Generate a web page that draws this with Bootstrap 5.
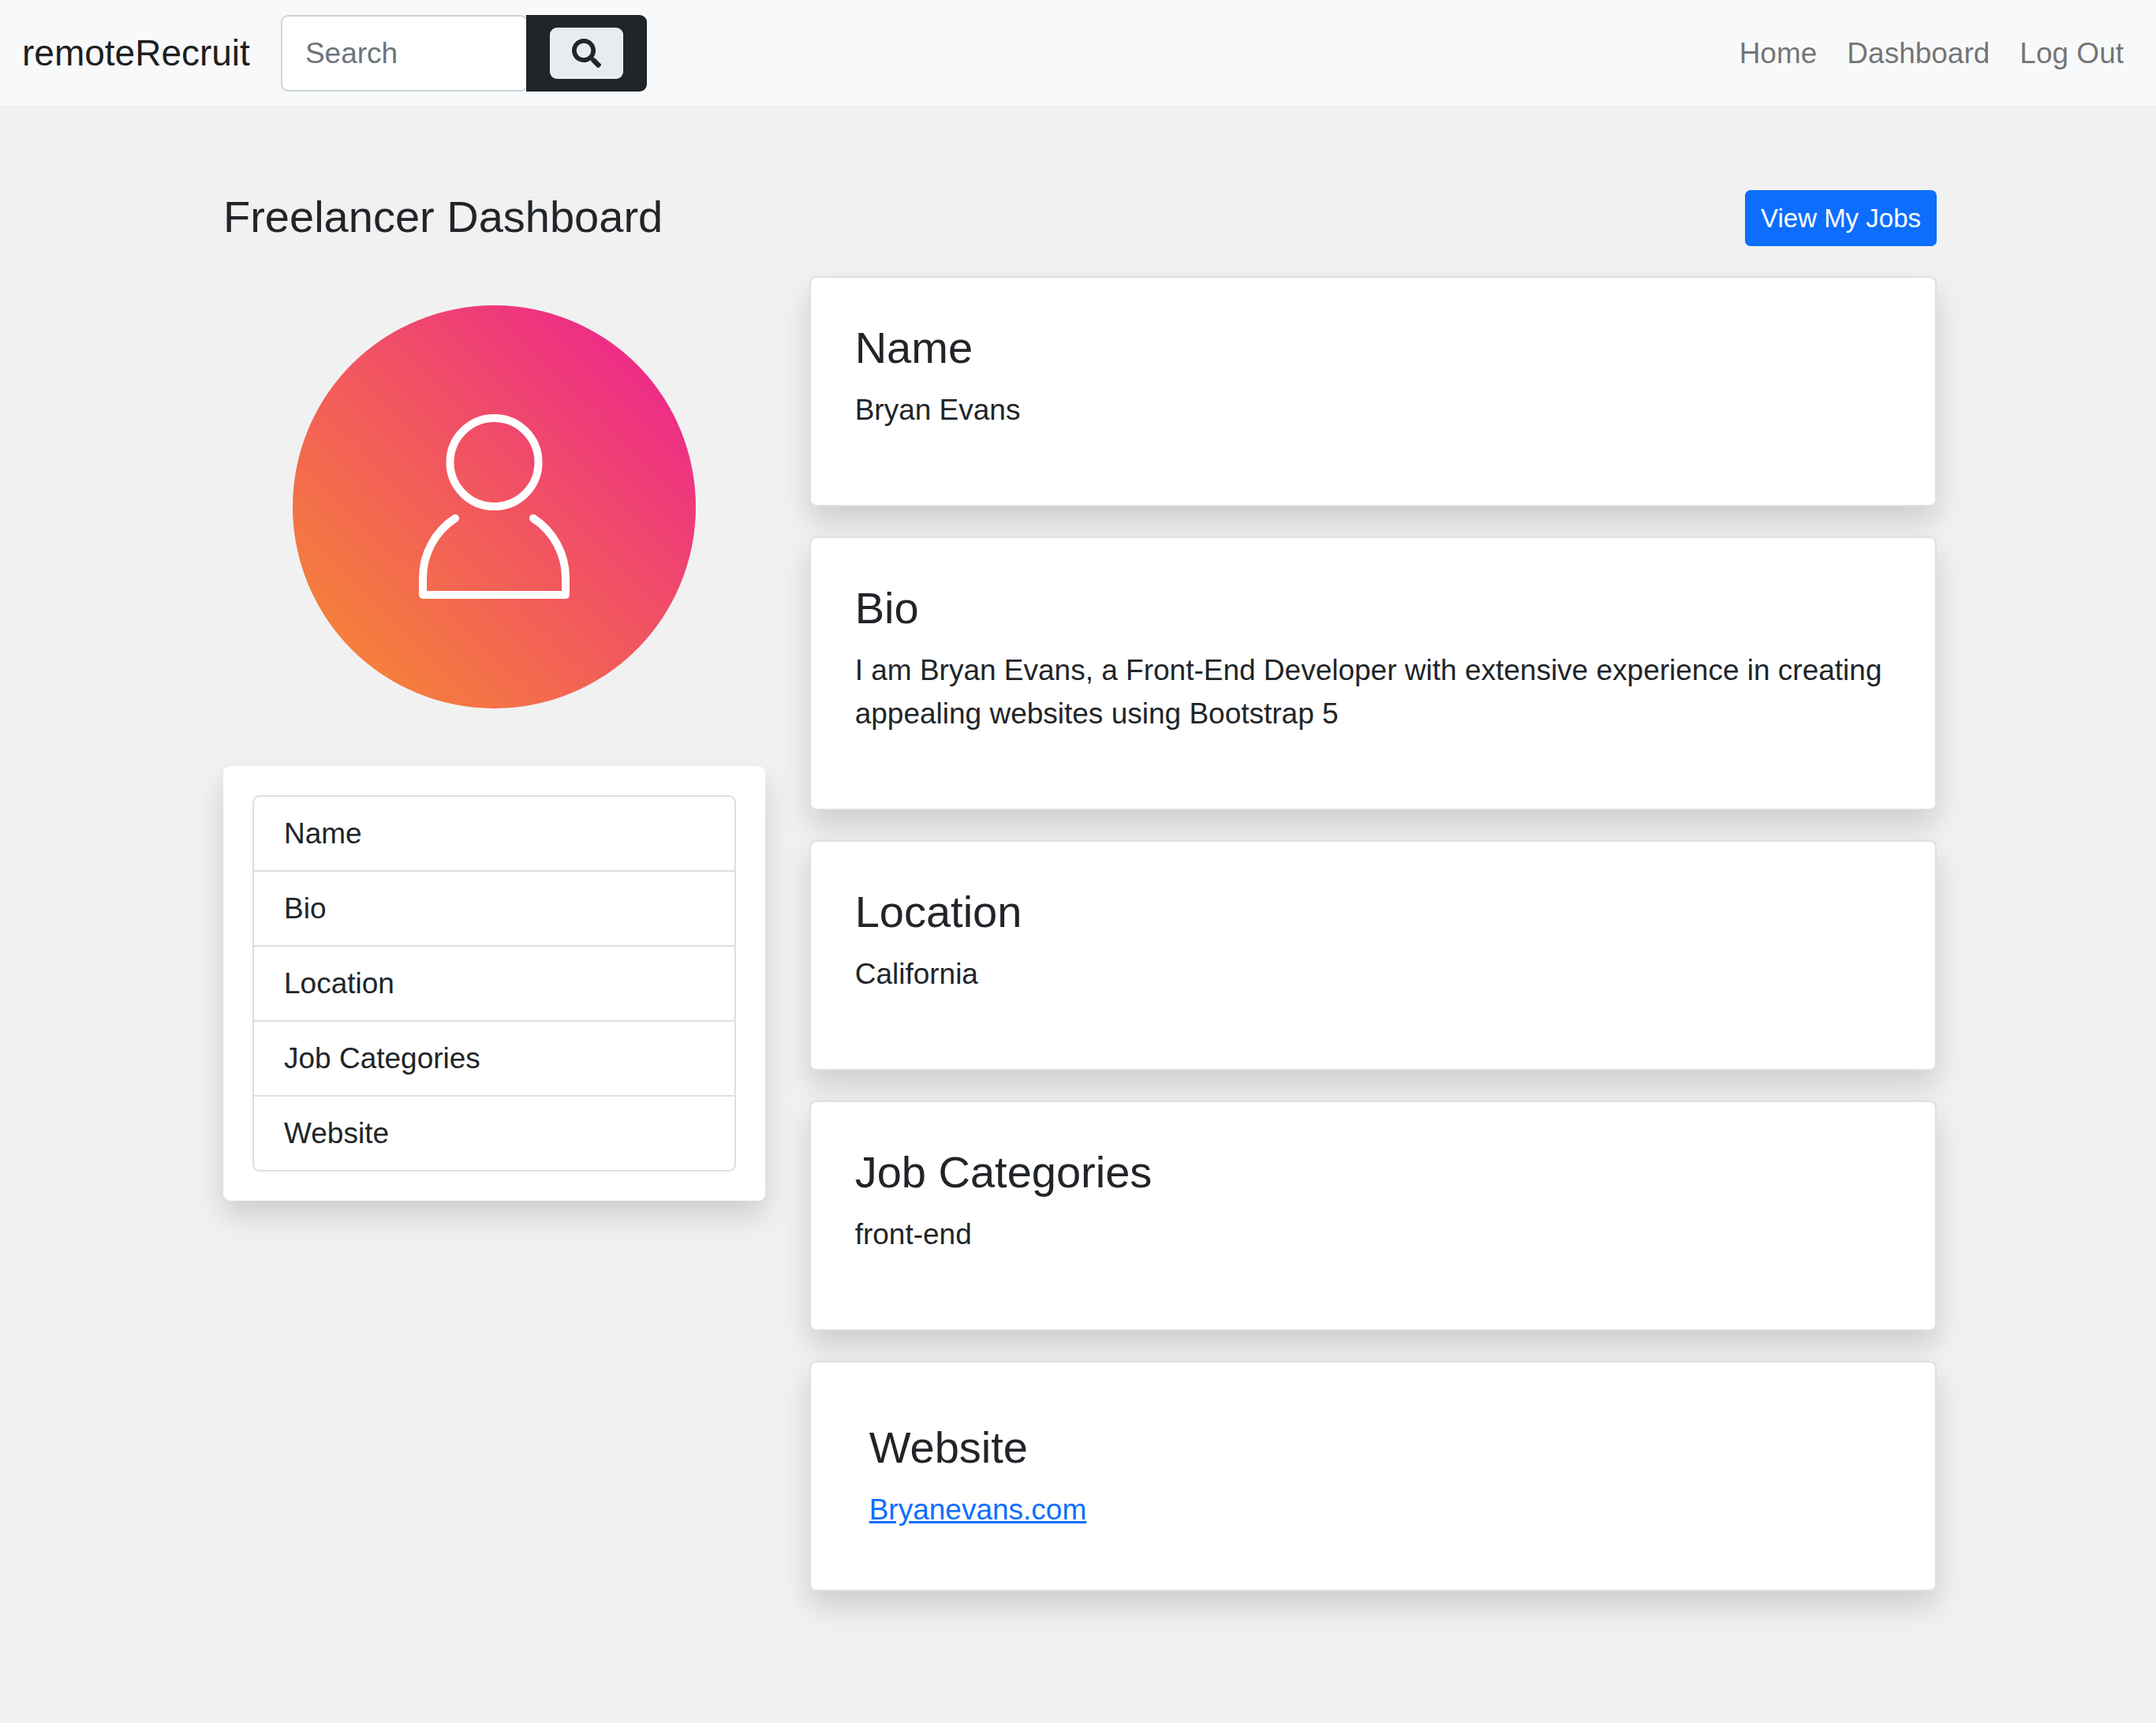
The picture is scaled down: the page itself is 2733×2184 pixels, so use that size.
<!DOCTYPE html>
<html lang="en">
<head>
<meta charset="utf-8">
<meta name="viewport" content="width=device-width, initial-scale=1">
<title>remoteRecruit</title>
<link href="https://cdn.jsdelivr.net/npm/bootstrap@5.3.0/dist/css/bootstrap.min.css" rel="stylesheet">
<style>
  body { font: 400 37px/55px "Liberation Sans", Arial, sans-serif; background: #f1f1f1; color: #212529; }
  a { color: #0d6efd; }
  .site-nav { background: #f8f9fa; padding: 19px 22px 18px 28px; }
  .site-nav .navbar-brand { font-size: 46px; line-height: 69px; padding: 0; margin: 0 39px 0 0; color: rgba(0,0,0,.9); }
  .site-nav .navbar-nav .nav-link { padding: 18px 19px; font-size: 37px; line-height: 55px; color: rgba(0,0,0,.55); }
  .search-box { width: 313px; height: 97px; padding: 14px 29px; border: 2px solid #ced4da; border-radius: 9px; font-size: 37px; line-height: 55px; background: #fff; }
  .search-box::placeholder { color: #6c757d; }
  .search-addon { margin-left: -2px; padding: 16px 30px; background: #212529; border-radius: 0 9px 9px 0; }
  .search-btn { width: 93px; height: 65px; padding: 0; border: 0; border-radius: 9px; background: #e9ecef; color: #212529; }
  .search-btn:hover { background: #fff; }
  .search-btn svg { width: 37px; height: 37px; }
  .dash { padding: 107px 0 74px 5px; }
  .dash > .container { max-width: 2228px; --bs-gutter-x: 56px; }
  .dash .row { --bs-gutter-x: 56px; }
  .dash-head { margin-bottom: 38px; }
  .dash h1, .panel-card h2 { font-size: 56px; line-height: 67px; font-weight: 400; margin: 0; }
  .jobs-btn { font-size: 33px; line-height: 49px; padding: 9px 18px; border-width: 2px; border-radius: 7px; background: #0d6efd; border-color: #0d6efd; }
  .avatar { display: block; width: 511px; max-width: 100%; margin: 37px auto 73px; }
  .raised { box-shadow: 0 19px 37px rgba(0,0,0,.15); border-radius: 9px; background: #fff; }
  .side-menu { padding: 37px; }
  .side-menu .list-group { --bs-list-group-border-width: 2px; --bs-list-group-border-radius: 9px; --bs-list-group-border-color: #dfdfdf; }
  .side-menu .list-group-item { padding: 19px 38px; line-height: 55px; color: #212529; }
  .panel-card { border: 2px solid #dfdfdf; padding: 55px 56px; }
  .panel-card h2 { margin-bottom: 18px; }
  .panel-card p { margin: 0 0 38px; }
  .panel-card.roomy { padding: 74px; }
  .panel-card.roomy p { margin: 0; }
  .stack { gap: 38px; }
</style>
</head>
<body>
<nav class="site-nav navbar navbar-expand">
  <a class="navbar-brand" href="#">remoteRecruit</a>
  <form class="d-flex" role="search">
    <input class="form-control search-box" type="search" placeholder="Search" aria-label="Search">
    <span class="search-addon d-flex">
      <button class="search-btn d-flex align-items-center justify-content-center" type="button" aria-label="Submit search">
        <svg viewBox="0 0 512 512" fill="currentColor" aria-hidden="true"><path d="M505 442.7L405.3 343c-4.5-4.5-10.6-7-17-7H372c27.6-35.3 44-79.7 44-128C416 93.1 322.9 0 208 0S0 93.1 0 208s93.1 208 208 208c48.3 0 92.7-16.4 128-44v16.3c0 6.4 2.5 12.5 7 17l99.7 99.7c9.4 9.4 24.6 9.4 33.9 0l28.3-28.3c9.4-9.4 9.4-24.6.1-34zM208 336c-70.7 0-128-57.2-128-128 0-70.7 57.2-128 128-128 70.7 0 128 57.2 128 128 0 70.7-57.2 128-128 128z"/></svg>
      </button>
    </span>
  </form>
  <ul class="navbar-nav ms-auto">
    <li class="nav-item"><a class="nav-link" href="#">Home</a></li>
    <li class="nav-item"><a class="nav-link" href="#">Dashboard</a></li>
    <li class="nav-item"><a class="nav-link" href="#">Log Out</a></li>
  </ul>
</nav>

<main class="dash">
  <div class="container">
    <div class="dash-head d-flex justify-content-between align-items-start">
      <h1>Freelancer Dashboard</h1>
      <button class="btn btn-primary jobs-btn" type="button">View My Jobs</button>
    </div>
    <div class="row">
      <div class="col-md-4">
        <svg class="avatar" viewBox="0 0 511 511" role="img" aria-label="Profile picture">
          <defs>
            <linearGradient id="sunset" x1="0.13" y1="0.87" x2="0.87" y2="0.13">
              <stop offset="0" stop-color="#f5803b"/>
              <stop offset="0.54" stop-color="#f15362"/>
              <stop offset="1" stop-color="#ed2b88"/>
            </linearGradient>
          </defs>
          <circle cx="255.5" cy="255.5" r="255.5" fill="url(#sunset)"/>
          <g fill="none" stroke="#fff" stroke-width="10" stroke-linecap="round" stroke-linejoin="round">
            <circle cx="255.5" cy="199" r="56"/>
            <path d="M206 270A90 90 0 0 0 165 345V367H346V345A90 90 0 0 0 305 270"/>
          </g>
        </svg>
        <div class="side-menu raised">
          <div class="list-group">
            <a class="list-group-item list-group-item-action" href="#name">Name</a>
            <a class="list-group-item list-group-item-action" href="#bio">Bio</a>
            <a class="list-group-item list-group-item-action" href="#location">Location</a>
            <a class="list-group-item list-group-item-action" href="#categories">Job Categories</a>
            <a class="list-group-item list-group-item-action" href="#website">Website</a>
          </div>
        </div>
      </div>
      <div class="col-md-8 d-flex flex-column stack">
        <section class="panel-card raised" id="name">
          <h2>Name</h2>
          <p>Bryan Evans</p>
        </section>
        <section class="panel-card raised" id="bio">
          <h2>Bio</h2>
          <p>I am Bryan Evans, a Front-End Developer with extensive experience in creating appealing websites using Bootstrap 5</p>
        </section>
        <section class="panel-card raised" id="location">
          <h2>Location</h2>
          <p>California</p>
        </section>
        <section class="panel-card raised" id="categories">
          <h2>Job Categories</h2>
          <p>front-end</p>
        </section>
        <section class="panel-card roomy raised" id="website">
          <h2>Website</h2>
          <p><a href="#website">Bryanevans.com</a></p>
        </section>
      </div>
    </div>
  </div>
</main>
<script src="https://cdn.jsdelivr.net/npm/bootstrap@5.3.0/dist/js/bootstrap.bundle.min.js"></script>
</body>
</html>
